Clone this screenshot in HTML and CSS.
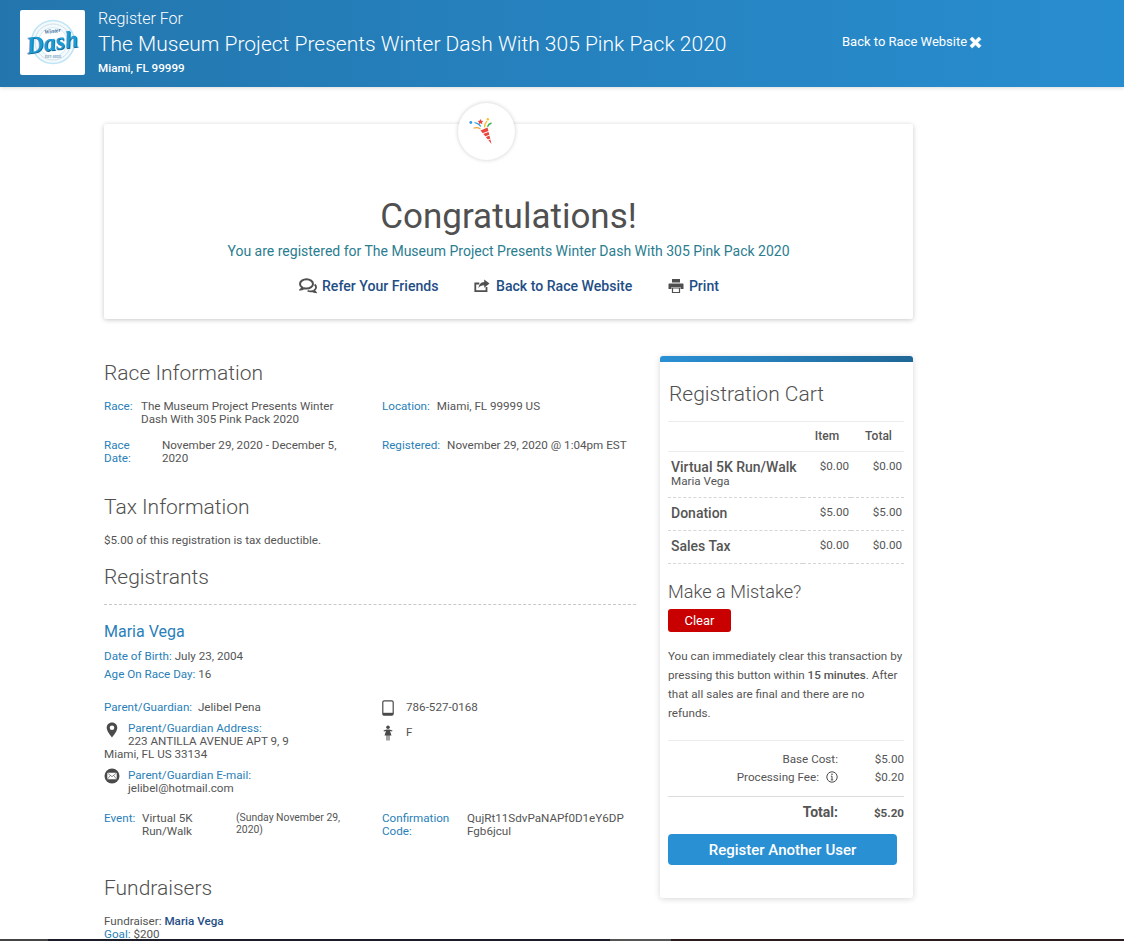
FILE: index.html
```html
<!DOCTYPE html>
<html lang="en">
<head>
<meta charset="utf-8">
<title>Registration Confirmation</title>
<link rel="stylesheet" href="styles.css">
</head>
<body>
<header class="topbar">
  <div class="logo">
    <svg viewBox="0 0 65 65" width="65" height="65">
      <circle cx="33" cy="32" r="21.500" fill="#f3fafd" stroke="#bfe4f5" stroke-width="1.500"/>
      <circle cx="33" cy="32" r="18" fill="none" stroke="#d5dfe8" stroke-width="1"/>
      <circle cx="33" cy="32" r="14.500" fill="#fff" stroke="#cfeaf7" stroke-width="1"/>
      <g transform="rotate(-8 33 32)">
        <text x="34" y="23" class="logo-top">Winter</text>
        <text x="32.600" y="41" class="logo-shadow">Dash</text>
        <text x="32" y="40" class="logo-dash">Dash</text>
      </g>
      <text x="33" y="48" class="logo-sub">EST. 2020</text>
    </svg>
  </div>
  <div class="reg-titles">
    <div class="reg-for">Register For</div>
    <div class="reg-name">The Museum Project Presents Winter Dash With 305 Pink Pack 2020</div>
    <div class="reg-place">Miami, FL 99999</div>
  </div>
  <a class="back-link">Back to Race Website
    <svg class="x-icon" viewBox="0 0 14 14" width="13" height="13"><path d="M1 3.500 3.500 1 7 4.500 10.500 1 13 3.500 9.500 7 13 10.500 10.500 13 7 9.500 3.500 13 1 10.500 4.500 7Z" fill="#fff" stroke="#fff" stroke-width=".6" stroke-linejoin="round"/></svg>
  </a>
</header>

<main class="wrap">
  <section class="congrats">
    <div class="badge">
      <svg viewBox="0 0 26 28" width="26" height="28">
        <path d="M11.500 12.500 18.500 9.500 22.500 26Z" fill="#e8483f"/>
        <path d="M13.800 15.600 19.800 13.400M15.800 19 21 17M17.700 22.300 21.600 21" stroke="#fff" stroke-width="1"/>
        <circle cx="1.800" cy="4.500" r="1.400" fill="#2e9ae0"/>
        <path d="M5.500 4.500Q10 5.500 11.800 8.500" fill="none" stroke="#2e9ae0" stroke-width="1.200"/>
        <path d="M4.500 10.300Q8 8.800 11.500 11" fill="none" stroke="#f2a53a" stroke-width="1.200"/>
        <path d="M11.500 1 12.400 2.800 14.300 3 13 4.300 13.300 6.200 11.500 5.300 9.700 6.200 10 4.300 8.700 3 10.600 2.800Z" fill="#e8483f"/>
        <path d="M15.500 9.500Q15.500 5.500 18 3" fill="none" stroke="#f2c230" stroke-width="1.200"/>
        <circle cx="18.800" cy="1.300" r="1.200" fill="#f2c230"/>
        <path d="M18.500 8.800Q19.500 5.800 22.500 5" fill="none" stroke="#37b24d" stroke-width="1.400"/>
      </svg>
    </div>
    <h1 class="congrats-title">Congratulations!</h1>
    <p class="congrats-sub">You are registered for The Museum Project Presents Winter Dash With 305 Pink Pack 2020</p>
    <div class="actions">
      <a class="action">
        <svg viewBox="0 0 18 16" width="18" height="16"><path d="M7.500 1.200C3.900 1.200 1 3.300 1 5.900c0 1.400.8 2.600 2.100 3.500-.2.800-.6 1.500-1.200 2 1.200-.1 2.300-.6 3.100-1.200.8.200 1.600.3 2.500.3 3.600 0 6.500-2.100 6.500-4.600s-2.900-4.700-6.500-4.700Z" fill="none" stroke="#4f4f4f" stroke-width="2"/><path d="M15.600 6.500c1 .8 1.500 1.700 1.500 2.800 0 1.200-.7 2.300-1.800 3 .2.800.6 1.400 1.100 1.900-1.100-.1-2.100-.5-2.800-1.100-.6.200-1.300.2-2 .2-1.100 0-2.100-.2-3-.6" fill="none" stroke="#4f4f4f" stroke-width="1.800"/></svg>
        <span>Refer Your Friends</span>
      </a>
      <a class="action gap6">
        <svg viewBox="0 0 16 14" width="16" height="14"><path d="M12.500 8v4.200H1.300V4.500h4" fill="none" stroke="#4f4f4f" stroke-width="1.800"/><path d="M10.200.5 15.500 4.600 10.200 8.700V6.200C7.500 6.200 5.600 7 4.500 9.200 4.700 5.500 7 3.200 10.200 3Z" fill="#4f4f4f"/></svg>
        <span>Back to Race Website</span>
      </a>
      <a class="action">
        <svg viewBox="0 0 16 14" width="16" height="14"><path d="M4 0h8v3.500H4Z" fill="#4f4f4f"/><path d="M1.500 4.500h13c.6 0 1 .4 1 1V10h-3V8h-9v2h-3V5.500c0-.6.400-1 1-1Z" fill="#4f4f4f"/><path d="M4.500 9h7v4.500h-7Z" fill="#fff" stroke="#4f4f4f" stroke-width="1.200"/></svg>
        <span>Print</span>
      </a>
    </div>
  </section>

  <div class="columns">
    <div class="details">
      <h2 class="sec-title first">Race Information</h2>
      <div class="info-grid">
        <div class="pair"><span class="lbl race-l">Race:</span><span class="val">The Museum Project Presents Winter Dash With 305 Pink Pack 2020</span></div>
        <div class="pair"><span class="lbl nowrap">Location:</span><span class="val">Miami, FL 99999 US</span></div>
        <div class="pair"><span class="lbl date-l">Race Date:</span><span class="val date-v">November 29, 2020 - December 5, 2020</span></div>
        <div class="pair"><span class="lbl nowrap">Registered:</span><span class="val">November 29, 2020 @ 1:04pm EST</span></div>
      </div>

      <h2 class="sec-title tax">Tax Information</h2>
      <p class="tax-note">$5.00 of this registration is tax deductible.</p>

      <h2 class="sec-title reg">Registrants</h2>
      <div class="dash-rule"></div>
      <h3 class="person">Maria Vega</h3>
      <div class="line"><span class="lbl">Date of Birth:</span> July 23, 2004</div>
      <div class="line"><span class="lbl">Age On Race Day:</span> 16</div>

      <div class="contact">
        <div class="contact-left">
          <div class="guardian"><span class="lbl">Parent/Guardian:</span>&nbsp; Jelibel Pena</div>
          <div class="addr">
            <svg class="float-ico" viewBox="0 0 12 16" width="12" height="16"><path fill-rule="evenodd" d="M6 .500C2.900.500.700 2.800.700 5.700.700 9 4.300 13 6 15.500 7.700 13 11.300 9 11.300 5.700 11.300 2.800 9.100.500 6 .500Zm0 3a2.300 2.300 0 1 1 0 4.600 2.300 2.300 0 0 1 0-4.600Z" fill="#4a4a4a"/></svg>
            <span class="lbl">Parent/Guardian Address:</span><br>223 ANTILLA AVENUE APT 9, 9<br><span class="addr-out">Miami, FL US 33134</span>
          </div>
          <div class="mail">
            <svg class="mail-ico" viewBox="0 0 16 16" width="16" height="16"><circle cx="8" cy="8" r="7.500" fill="#4a4a4a"/><rect x="3.300" y="4.800" width="9.400" height="6.400" rx=".5" fill="#fff"/><path d="M3.500 5 8 8.700 12.500 5M3.500 11 6.500 7.300M12.500 11 9.500 7.300" fill="none" stroke="#4a4a4a" stroke-width=".6"/></svg>
            <div><span class="lbl">Parent/Guardian E-mail:</span><br>jelibel@hotmail.com</div>
          </div>
        </div>
        <div class="contact-right">
          <div class="c-row phone-row">
            <svg viewBox="0 0 12 16" width="12" height="16"><rect x=".8" y=".8" width="10.400" height="14.400" rx="1.500" fill="none" stroke="#4a4a4a" stroke-width="1.200"/><rect x="1" y="12.800" width="10" height="2.200" fill="#4a4a4a"/></svg>
            <span class="c-text">786-527-0168</span>
          </div>
          <div class="c-row gender-row">
            <svg viewBox="0 0 12 16" width="12" height="16"><circle cx="6" cy="2.300" r="1.800" fill="#4a4a4a"/><path d="M1.500 5.500 4.500 4.500h3l3 1-.4 1L8 6 9.500 10.500H7.500V15.500H6.500V10.500H5.500V15.500H4.500V10.500H2.500L4 6 1.900 6.500Z" fill="#4a4a4a"/></svg>
            <span class="c-text">F</span>
          </div>
        </div>
      </div>

      <div class="event-row">
        <div class="event-left">
          <span class="lbl ev-l">Event:</span>
          <span class="ev-name">Virtual 5K Run/Walk</span>
          <span class="ev-date">(Sunday November 29, 2020)</span>
        </div>
        <div class="event-right">
          <span class="lbl conf-l">Confirmation Code:</span>
          <span class="conf-code">QujRt11SdvPaNAPf0D1eY6DP Fgb6jcul</span>
        </div>
      </div>

      <h2 class="sec-title fund">Fundraisers</h2>
      <div class="fund-line">Fundraiser: <strong>Maria Vega</strong></div>
      <div class="fund-line"><span class="lbl">Goal:</span> $200</div>
    </div>

    <aside class="cart">
      <div class="cart-bar"></div>
      <div class="cart-body">
        <h2 class="cart-title">Registration Cart</h2>
        <table class="cart-table">
          <thead><tr><th></th><th>Item</th><th>Total</th></tr></thead>
          <tbody>
            <tr><td class="c-name"><b>Virtual 5K Run/Walk</b><small>Maria Vega</small></td><td>$0.00</td><td>$0.00</td></tr>
            <tr><td class="c-name"><b>Donation</b></td><td>$5.00</td><td>$5.00</td></tr>
            <tr><td class="c-name"><b>Sales Tax</b></td><td>$0.00</td><td>$0.00</td></tr>
          </tbody>
        </table>
        <h3 class="mistake">Make a Mistake?</h3>
        <button class="clear-btn">Clear</button>
        <p class="mistake-note">You can immediately clear this transaction by pressing this button within <strong>15 minutes</strong>. After that all sales are final and there are no refunds.</p>
        <div class="costs">
          <div class="cost-row"><span>Base Cost:</span><span class="amt">$5.00</span></div>
          <div class="cost-row"><span class="fee">Processing Fee:
            <svg viewBox="0 0 12 12" width="12" height="12"><circle cx="6" cy="6" r="5.200" fill="none" stroke="#4a4a4a" stroke-width="1"/><path d="M6 5.200v3.600M4.800 8.900h2.400M4.900 5.200H6" stroke="#4a4a4a" stroke-width="1" fill="none"/><circle cx="6" cy="3.300" r=".8" fill="#4a4a4a"/></svg></span><span class="amt">$0.20</span></div>
        </div>
        <div class="total-row"><span class="t-lbl">Total:</span><span class="t-amt">$5.20</span></div>
        <button class="another-btn">Register Another User</button>
      </div>
    </aside>
  </div>
</main>
<div class="bottom-strip"></div>
</body>
</html>
```
FILE: styles.css
```css
* { box-sizing: border-box; }
html, body { margin: 0; height: 941px; overflow: hidden; background: #fff; }
body { font-family: Roboto, "Liberation Sans", sans-serif; font-size: 11.650px; line-height: 13px; color: #555; }
a { text-decoration: none; }

.topbar { height: 87px; padding: 10px 0 0 20px; display: flex; align-items: flex-start; background: linear-gradient(90deg, #2376ad 0%, #288dcf 100%); color: #fff; box-shadow: 0 1px 4px rgba(0,0,0,.15); position: relative; }
.logo { width: 65px; height: 65px; border-radius: 2px; background: #fff; flex: none; }
.logo svg { display: block; }
.logo-top { font: italic 700 6px "Liberation Serif", serif; fill: #3e6f9e; text-anchor: middle; }
.logo-dash { font: italic 700 24px "Liberation Serif", serif; fill: #1c9ad6; text-anchor: middle; }
.logo-shadow { font: italic 700 24px "Liberation Serif", serif; fill: #14688f; text-anchor: middle; }
.logo-sub { font: 700 3.500px Roboto, sans-serif; fill: #8aa9bf; text-anchor: middle; }
.reg-titles { margin-left: 13px; width: 744px; flex: none; }
.reg-for { font-size: 16px; font-weight: 300; line-height: 18px; }
.reg-name { font-size: 21px; font-weight: 300; line-height: 26px; margin-top: 3px; white-space: nowrap; }
.reg-place { font-size: 11.650px; font-weight: 500; line-height: 14px; margin-top: 4px; }
.back-link { display: flex; align-items: center; gap: 2px; margin-top: 24px; font-size: 13px; line-height: 16px; color: #fff; white-space: nowrap; }
.x-icon { flex: none; }

.wrap { width: 809px; margin: 37px 0 0 104px; }
.congrats { height: 195px; position: relative; border-radius: 2px; background: #fff; box-shadow: 0 1px 5px rgba(0,0,0,.22); text-align: center; padding-top: 73px; }
.badge { position: absolute; left: 354px; top: -21px; width: 57px; height: 57px; border-radius: 50%; background: #fff; box-shadow: 0 0 4px rgba(0,0,0,.2); display: flex; align-items: center; justify-content: center; }
.badge svg { margin-right: 10px; }
.congrats-title { margin: 0; font-size: 35px; font-weight: 400; line-height: 40px; color: #505050; }
.congrats-sub { margin: 5px 0 0; font-size: 14px; line-height: 18px; color: #2a7d8f; }
.actions { display: flex; justify-content: center; gap: 35.500px; margin-top: 17px; padding-left: 1px; }
.action { display: flex; align-items: center; gap: 5px; font-size: 14.100px; font-weight: 500; line-height: 18px; color: #1f4e85; white-space: nowrap; }
.action.gap6 { gap: 6px; }

.columns { display: flex; justify-content: space-between; margin-top: 37px; }
.details { width: 532px; }
.sec-title { margin: 0; font-size: 21px; font-weight: 300; line-height: 24px; color: #505050; }
.sec-title.first { margin-top: 5px; }
.info-grid { display: grid; grid-template-columns: 278px 1fr; row-gap: 13px; margin-top: 15px; }
.pair { display: flex; gap: 7px; align-items: flex-start; }
.lbl { color: #2a7fb8; }
.nowrap { white-space: nowrap; }
.race-l { flex: none; width: 30px; }
.date-l { flex: none; width: 51px; }
.pair .val { max-width: 205px; }
.pair .date-v { max-width: 180px; }
.info-grid .pair:nth-child(even) .val { max-width: none; white-space: nowrap; }
.tax { margin-top: 30px; }
.tax-note { margin: 15px 0 0; }
.reg { margin-top: 18px; }
.dash-rule { border-top: 1px dashed #c8c8c8; margin-top: 15px; }
.person { margin: 17px 0 0; font-size: 16px; font-weight: 400; line-height: 20px; color: #2a7fb8; }
.line { margin-top: 8px; }
.line + .line { margin-top: 5px; }
.contact { display: flex; margin-top: 19px; }
.contact-left { width: 278px; flex: none; }
.guardian { line-height: 15px; }
.addr { margin-top: 7px; }
.float-ico { float: left; margin: 0 10px 0 2px; }
.mail { display: flex; gap: 8px; margin-top: 8px; }
.mail-ico { flex: none; margin-top: -1px; }
.c-row { display: flex; gap: 12px; align-items: flex-start; }
.c-row svg { flex: none; }
.c-text { margin-top: 1px; }
.gender-row { margin-top: 9px; }
.event-row { display: flex; margin-top: 17px; }
.event-left { width: 278px; flex: none; display: flex; }
.ev-l { flex: none; width: 38px; }
.ev-name { flex: none; width: 94px; }
.ev-date { font-size: 10.400px; line-height: 12px; width: 120px; }
.event-right { display: flex; }
.conf-l { flex: none; width: 85px; }
.conf-code { width: 162px; word-break: break-all; }
.fund { margin-top: 38px; }
.fund + .fund-line { margin-top: 15px; }
.fund-line strong { font-weight: 500; color: #1f4e85; }

.cart { width: 253px; height: 542px; border-radius: 3px; background: #fff; box-shadow: 0 1px 6px rgba(0,0,0,.16); }
.cart-bar { height: 6px; border-radius: 3px 3px 0 0; background: linear-gradient(90deg, #2a90d4, #1f6796); }
.cart-body { padding: 20px 9px 0 8px; }
.cart-title { margin: 0; font-size: 21px; font-weight: 300; line-height: 24px; color: #505050; padding-left: 1px; }
.cart-table { width: 236px; margin-top: 15px; border-collapse: collapse; table-layout: fixed; }
.cart-table th { height: 30px; width: 48px; border-top: 1px solid #ececec; border-bottom: 1px solid #ececec; font-size: 12px; font-weight: 500; text-align: center; }
.cart-table th:first-child { width: 135px; }
.cart-table th:last-child { width: 53px; padding-left: 3px; }
.cart-table td { text-align: right; vertical-align: top; padding: 8px 2px 0 0; line-height: 13px; border-bottom: 1px dashed #d6d6d6; }
.cart-table tbody tr { height: 33px; }
.cart-table .c-name { text-align: left; padding: 7px 0 0 3px; }
.c-name b { display: block; font-size: 14px; font-weight: 500; line-height: 16px; }
.c-name small { display: block; font-size: 11.650px; line-height: 13px; padding-bottom: 9px; }
.mistake { margin: 17px 0 0; font-size: 18.200px; font-weight: 300; line-height: 22px; color: #505050; }
.clear-btn { display: block; width: 63px; height: 23px; margin-top: 6px; border: 0; border-radius: 3px; background: #c80000; color: #fff; font: 400 13px Roboto, sans-serif; padding: 0; }
.mistake-note { margin: 15px 0 0; line-height: 19px; }
.mistake-note strong { font-weight: 500; }
.costs { border-top: 1px solid #ececec; margin-top: 17px; padding-top: 9px; }
.cost-row { display: flex; justify-content: flex-end; line-height: 18px; }
.cost-row .amt { width: 66px; text-align: right; }
.fee { display: inline-flex; align-items: center; gap: 7px; }
.total-row { display: flex; justify-content: flex-end; align-items: baseline; border-top: 1px solid #dcdcdc; margin-top: 10px; padding-top: 6px; }
.t-lbl { font-size: 14px; font-weight: 700; line-height: 18px; }
.t-amt { width: 66px; text-align: right; font-weight: 700; }
.another-btn { display: block; width: 229px; height: 31px; margin-top: 13px; border: 0; border-radius: 4px; background: #2a90d4; color: #fff; font: 500 15px Roboto, sans-serif; padding: 0; }

.bottom-strip { position: fixed; left: 0; right: 0; bottom: 0; height: 2px; background: linear-gradient(90deg, #444 0 48px, #1c1c28 48px 610px, #555 610px 671px, #2a1c1c 671px); }
```
